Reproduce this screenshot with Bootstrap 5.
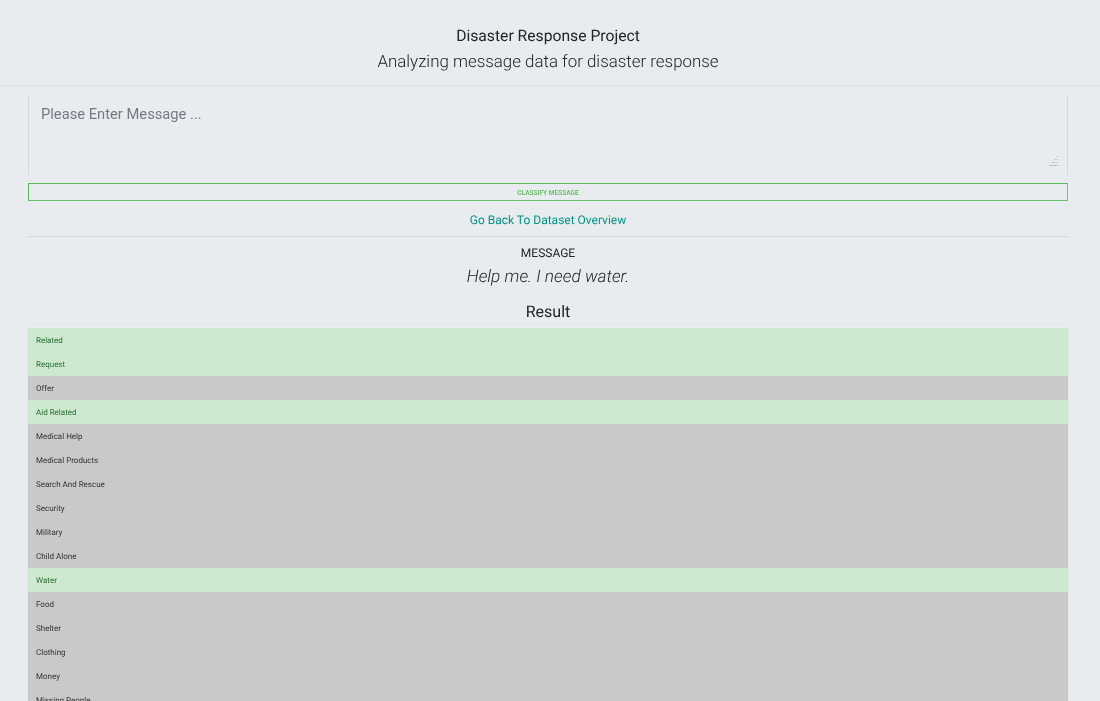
<!DOCTYPE html>
<html lang="en">
<head>
<meta charset="utf-8">
<title>Disaster Response Project</title>
<link rel="stylesheet" href="https://cdn.jsdelivr.net/npm/bootstrap@5.3.0/dist/css/bootstrap.min.css">
<style>
html, body { height: 701px; overflow: hidden; }
body { background: #e8ecef; font-family: Roboto, "Liberation Sans", sans-serif; color: #212529; font-size: 13px; text-rendering: geometricPrecision; }
.page-layer { will-change: transform; }
.site-head { border-bottom: 1px solid #dfe3e6; padding: 24px 4px 11px 0; }
.site-title { font-size: 15.7px; line-height: 24px; font-weight: 400; margin: 0 0 2px; }
.site-sub { font-size: 16.9px; line-height: 24px; font-weight: 300; margin: 0; }
.site-main { padding: 9px 32px 0 28px; }
.input-wrap { position: relative; }
.msg-input { display: block; width: 100%; height: 80px; padding: 7px 12px 9px; font-family: inherit; font-size: 14.72px; line-height: 24px; background: transparent; border: 0; border-left: 1px solid #d4d6d8; border-right: 1px solid #d4d6d8; border-radius: 0; resize: none; }
.msg-input::placeholder { color: #757b82; opacity: 1; }
.msg-input:focus { background: transparent; box-shadow: none; border-color: #d4d6d8; }
.grip-mark { position: absolute; right: 9px; bottom: 8px; width: 10px; height: 11px; }
.classify-btn { display: block; width: 100%; height: 18px; margin-top: 8px; padding: 0; font-family: inherit; font-size: 6.6px; line-height: 18px; font-weight: 500; text-transform: uppercase; color: #5cb85c; background: transparent; border: 1px solid #5cb85c; border-bottom-color: #6abf6e; border-right-color: #7cc47f; border-radius: 0; }
.back-link { display: block; margin-top: 11px; font-size: 12px; line-height: 16px; color: #009688; text-decoration: none; }
.rule-line { margin: 8px 0 0; border: 0; border-top: 1px solid #d6dadd; opacity: 1; }
.msg-label { font-size: 12px; line-height: 16px; margin: 8px 0 0; text-transform: uppercase; }
.msg-text { font-size: 17.3px; line-height: 24px; font-weight: 300; font-style: italic; margin: 4px 0 0; }
.result-title { font-size: 16px; line-height: 24px; font-weight: 400; margin: 11px 0 0; }
.cat-card { margin: 0 -1px; padding: 3px 0 0; background: transparent; border: 1px solid #e3e7ea; border-bottom: 0; border-radius: 4px; }
.cat-list { border-radius: 0; }
.cat-list .list-group-item { height: 24px; padding: 0 8px; border: 0; border-radius: 0; font-size: 8px; line-height: 25px; }
.cat-on { background: #cdead0; color: #2a6a30; }
.cat-off { background: #c9c9c9; color: #333; }
</style>
</head>
<body>
<div class="page-layer">
<header class="site-head text-center">
  <h1 class="site-title">Disaster Response Project</h1>
  <p class="site-sub">Analyzing message data for disaster response</p>
</header>
<main class="site-main">
  <form>
    <div class="input-wrap">
      <textarea class="form-control msg-input" placeholder="Please Enter Message ..."></textarea>
      <svg class="grip-mark" viewBox="0 0 10 11" aria-hidden="true">
        <g fill="#b4b7bb">
          <rect x="7.6" y="0" width="1" height="1"/>
          <rect x="7.6" y="3" width="1" height="1"/><rect x="5.6" y="3" width="1" height="1"/>
          <rect x="7.6" y="6" width="1" height="1"/><rect x="5.6" y="6" width="1" height="1"/><rect x="2.6" y="6" width="2" height="1"/>
        </g>
        <g fill="#8e9195">
          <rect x="7.6" y="9" width="1" height="1"/><rect x="5.6" y="9" width="1" height="1"/><rect x="0.6" y="9" width="1" height="1"/>
        </g>
        <rect x="2.6" y="9" width="2" height="1" fill="#b4b7bb"/>
      </svg>
    </div>
    <button type="button" class="btn classify-btn">Classify Message</button>
  </form>
  <div class="text-center">
    <a class="back-link" href="#">Go Back To Dataset Overview</a>
    <hr class="rule-line">
    <p class="msg-label">Message</p>
    <p class="msg-text">Help me. I need water.</p>
    <h2 class="result-title">Result</h2>
  </div>
  <div class="card cat-card">
  <ul class="list-group cat-list">
    <li class="list-group-item cat-on">Related</li>
    <li class="list-group-item cat-on">Request</li>
    <li class="list-group-item cat-off">Offer</li>
    <li class="list-group-item cat-on">Aid Related</li>
    <li class="list-group-item cat-off">Medical Help</li>
    <li class="list-group-item cat-off">Medical Products</li>
    <li class="list-group-item cat-off">Search And Rescue</li>
    <li class="list-group-item cat-off">Security</li>
    <li class="list-group-item cat-off">Military</li>
    <li class="list-group-item cat-off">Child Alone</li>
    <li class="list-group-item cat-on">Water</li>
    <li class="list-group-item cat-off">Food</li>
    <li class="list-group-item cat-off">Shelter</li>
    <li class="list-group-item cat-off">Clothing</li>
    <li class="list-group-item cat-off">Money</li>
    <li class="list-group-item cat-off">Missing People</li>
  </ul>
  </div>
</main>
</div>
<script src="https://cdn.jsdelivr.net/npm/bootstrap@5.3.0/dist/js/bootstrap.bundle.min.js"></script>
</body>
</html>
